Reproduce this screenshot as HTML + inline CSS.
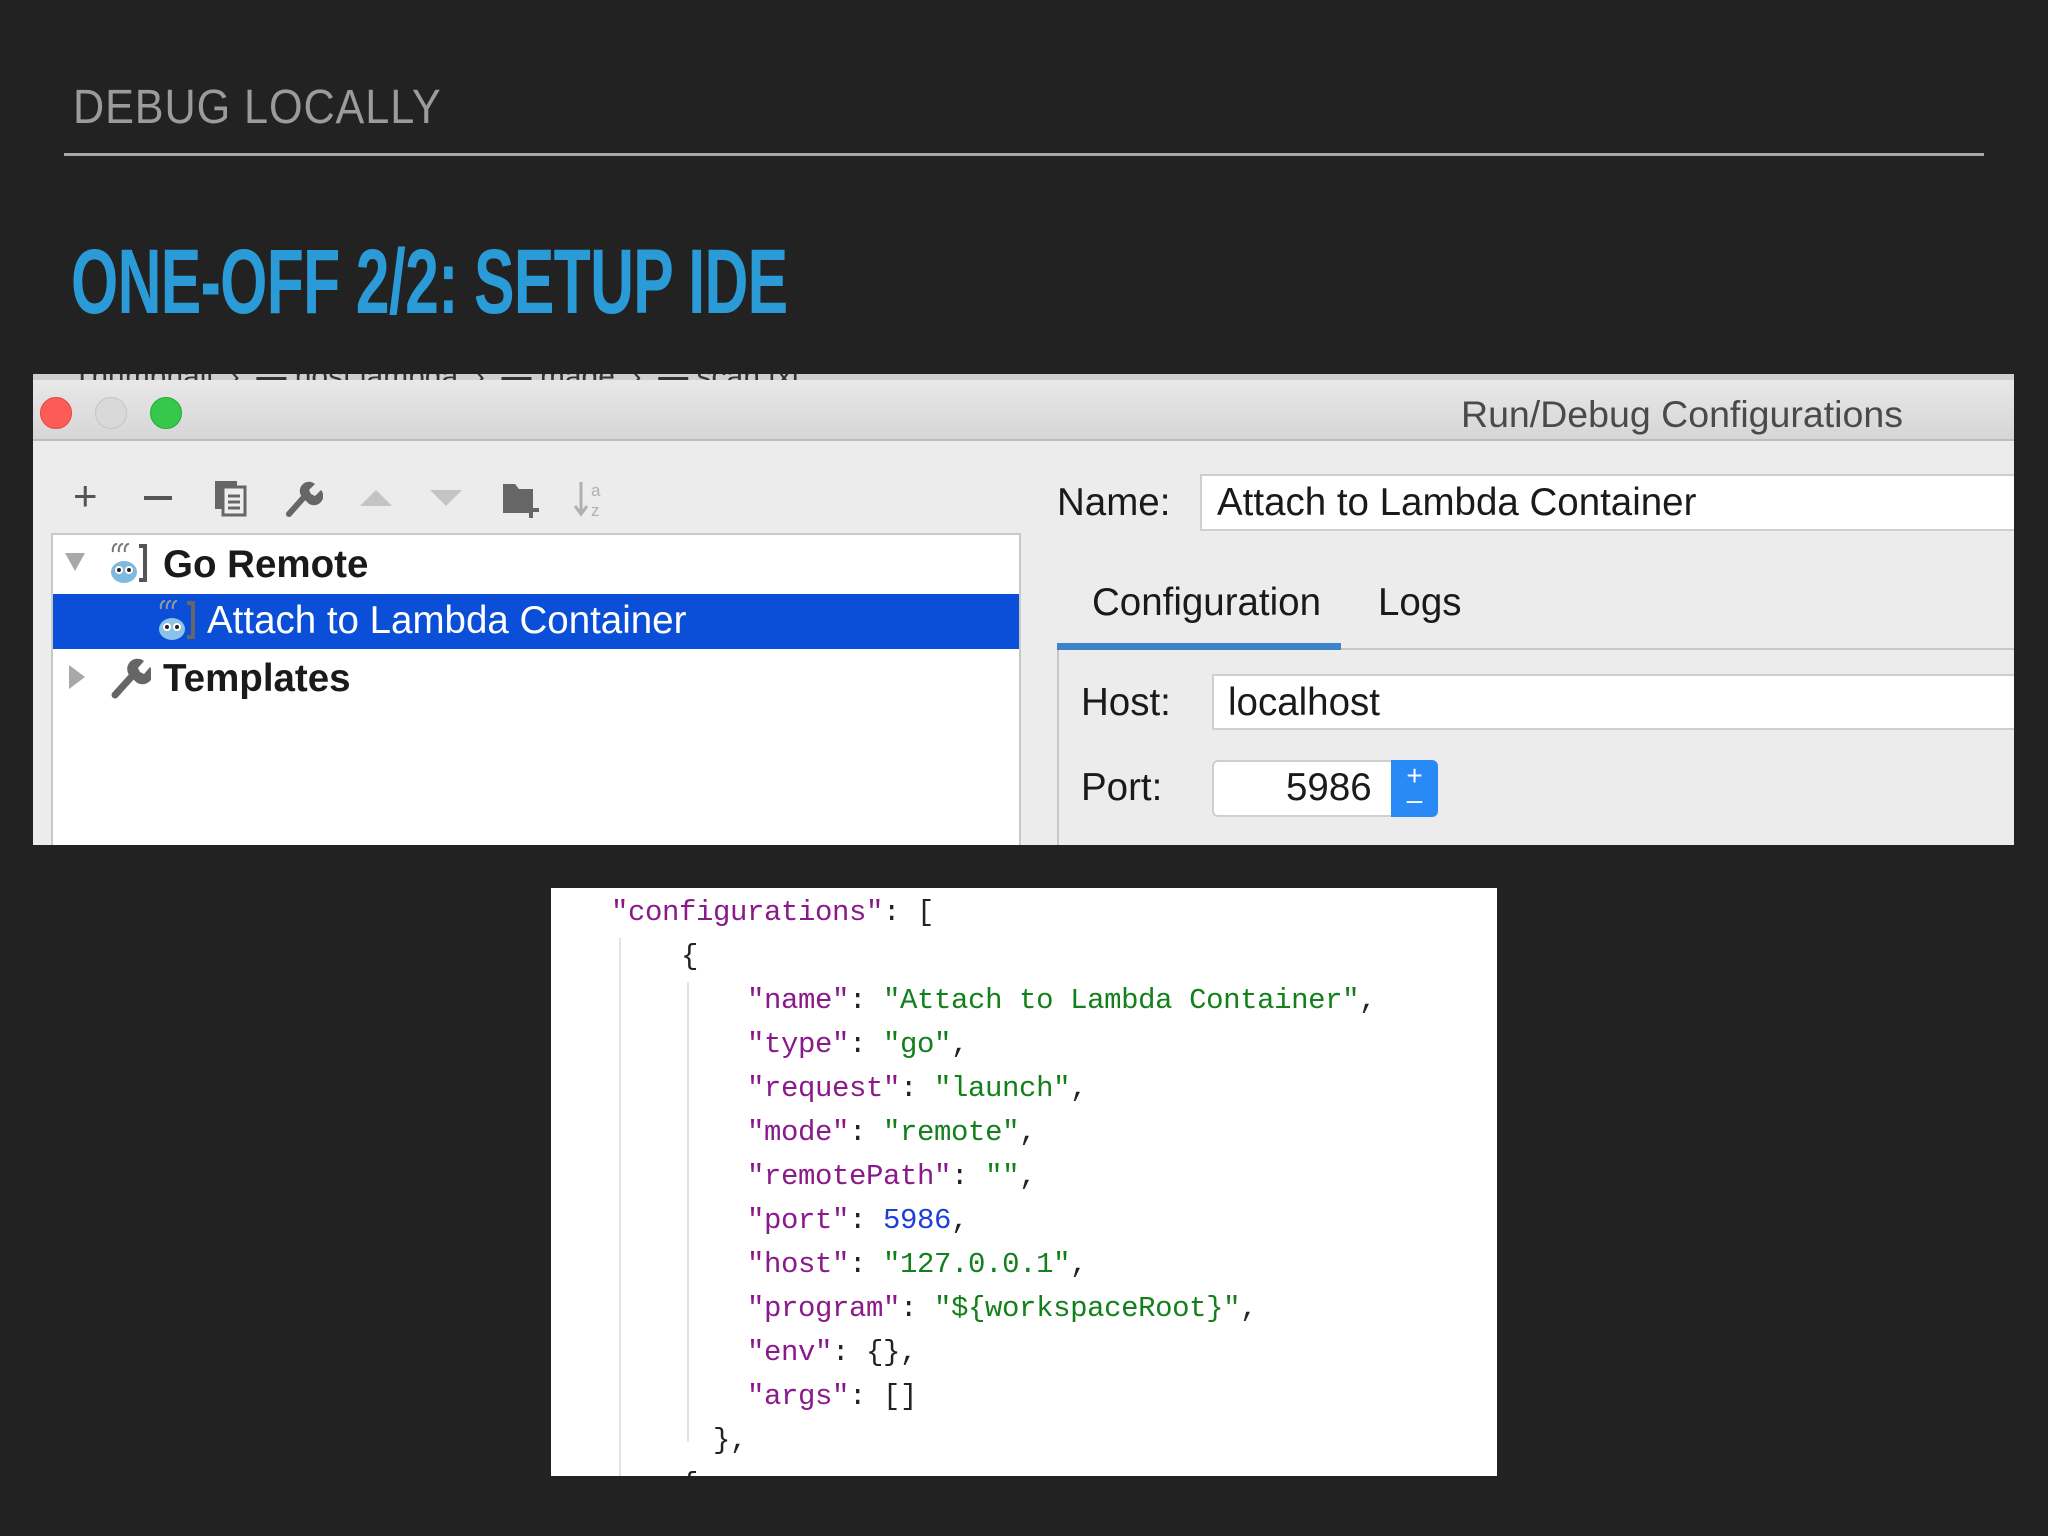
<!DOCTYPE html>
<html><head><meta charset="utf-8"><style>
*{margin:0;padding:0;box-sizing:border-box}
body{width:2048px;height:1536px;background:#222223;position:relative;overflow:hidden;font-family:"Liberation Sans",sans-serif}
.a{position:absolute}
.h1{left:73px;top:82px;font-size:48px;letter-spacing:1px;color:#9b9b9b;line-height:52px;transform:scaleX(0.9);transform-origin:left}
.rule{left:64px;top:153px;width:1920px;height:3px;background:#a8a8a8}
.h2{left:71px;top:232px;font-weight:bold;font-size:92px;line-height:100px;color:#2b9bd7;letter-spacing:-1px;transform:scaleX(0.66);transform-origin:left;white-space:nowrap}
.win{left:33px;top:374px;width:1981px;height:471px;background:#ececec;overflow:hidden}
.strip{left:0;top:0;width:100%;height:10px;background:#cfcfcf;overflow:hidden}
.tb{left:0;top:6px;width:100%;height:61px;background:linear-gradient(#e8e8e8,#d6d6d6);border-bottom:2px solid #bdbdbd}
.dot{width:32px;height:32px;border-radius:50%;top:17px}
.ui{font-size:38.5px;color:#1a1a1a;line-height:40px;white-space:nowrap}
.tree{left:18px;top:159px;width:970px;height:330px;background:#fff;border:2px solid #c9c9c9}
.field{background:#fff;border:2px solid #cfcfcf}
.code{left:551px;top:888px;width:946px;height:588px;background:#fff;overflow:hidden;font-family:"Liberation Mono",monospace;font-size:29px;letter-spacing:-0.4px}
.ln{position:absolute;white-space:pre;line-height:40px}
.k{color:#8a1a8c}.s{color:#14801b}.n{color:#1d3fd8}.p{color:#222}
.guide{position:absolute;width:2px;background:#e2e2e2}
</style></head><body>
<div class="a h1">DEBUG LOCALLY</div>
<div class="a rule"></div>
<div class="a h2">ONE-OFF 2/2: SETUP IDE</div>

<div class="a win">
 <div class="a strip"><div class="a" style="left:40px;top:-14px;font-size:30px;color:#333;white-space:pre">Thumbnail  ›  ▬ host lambda  ›  ▬ made  ›  ▬ scan.txt</div></div>
 <div class="a tb"></div>
 <div class="a dot" style="left:7px;top:23px;background:#fc5b57;border:1px solid #e04540"></div>
 <div class="a dot" style="left:62px;top:23px;background:#d9d9d9;border:1px solid #c4c4c4"></div>
 <div class="a dot" style="left:117px;top:23px;background:#35c84a;border:1px solid #27a93a"></div>
 <div class="a" style="left:1428px;top:19px;font-size:37.5px;color:#4a4a4a;white-space:nowrap">Run/Debug Configurations</div>

 <div class="a" style="left:40px;top:100px;font-size:42px;color:#555;line-height:44px">+</div>
 <div class="a" style="left:111px;top:122px;width:28px;height:4px;background:#555"></div>
 <svg class="a" style="left:180px;top:105px" width="36" height="38"><rect x="2" y="2" width="22" height="28" fill="#666"/><rect x="10" y="8" width="22" height="28" fill="#eee" stroke="#666" stroke-width="3"/><path d="M15 17h12M15 23h12M15 29h12" stroke="#666" stroke-width="3"/></svg>
 <svg class="a" style="left:250px;top:104px" width="40" height="40"><path d="M6 36L22 18" stroke="#666" stroke-width="6" stroke-linecap="round"/><path d="M20 20a9 9 0 0 1 12-14l-6 6 2 4 4 2 6-6a9 9 0 0 1-14 12z" fill="#666"/></svg>
 <svg class="a" style="left:325px;top:112px" width="36" height="24"><path d="M2 20L18 4 34 20z" fill="#c4c4c4"/></svg>
 <svg class="a" style="left:395px;top:112px" width="36" height="24"><path d="M2 4L18 20 34 4z" fill="#c4c4c4"/></svg>
 <svg class="a" style="left:468px;top:106px" width="42" height="38"><path d="M2 4h12l4 5h14v24H2z" fill="#666"/><path d="M30 22v16M22 30h16" stroke="#666" stroke-width="4"/></svg>
 <svg class="a" style="left:540px;top:104px" width="36" height="42"><path d="M8 4v30M2 28l6 8 6-8" stroke="#b0b0b0" stroke-width="3" fill="none"/><text x="18" y="18" font-size="17" fill="#b0b0b0" font-family="Liberation Sans">a</text><text x="18" y="38" font-size="17" fill="#b0b0b0" font-family="Liberation Sans">z</text></svg>

 <div class="a tree">
  <svg class="a" style="left:10px;top:14px" width="24" height="24"><path d="M2 4h20L12 22z" fill="#a8a8a8"/></svg>
  <svg class="a" style="left:54px;top:7px" width="42" height="42"><path d="M32 4h6v34h-6" stroke="#555" stroke-width="4" fill="none"/><path d="M6 10a4 6 0 0 1 4-8M12 10a4 6 0 0 1 4-8M18 10a4 6 0 0 1 4-8" stroke="#777" stroke-width="2" fill="none"/><ellipse cx="17" cy="30" rx="13" ry="11" fill="#7fb9e0"/><circle cx="12" cy="28" r="4" fill="#fff"/><circle cx="22" cy="28" r="4" fill="#fff"/><circle cx="12" cy="28" r="2" fill="#222"/><circle cx="22" cy="28" r="2" fill="#222"/></svg>
  <div class="a ui" style="left:110px;top:10px;font-weight:bold">Go Remote</div>
  <div class="a" style="left:0;top:59px;width:966px;height:55px;background:#0b4fd9"></div>
  <svg class="a" style="left:102px;top:64px" width="42" height="42"><path d="M32 4h6v34h-6" stroke="#666" stroke-width="4" fill="none"/><path d="M6 10a4 6 0 0 1 4-8M12 10a4 6 0 0 1 4-8M18 10a4 6 0 0 1 4-8" stroke="#999" stroke-width="2" fill="none"/><ellipse cx="17" cy="30" rx="13" ry="11" fill="#8cc3e8"/><circle cx="12" cy="28" r="4" fill="#fff"/><circle cx="22" cy="28" r="4" fill="#fff"/><circle cx="12" cy="28" r="2" fill="#222"/><circle cx="22" cy="28" r="2" fill="#222"/></svg>
  <div class="a ui" style="left:154px;top:66px;color:#fff">Attach to Lambda Container</div>
  <svg class="a" style="left:12px;top:128px" width="22" height="28"><path d="M4 2l16 12L4 26z" fill="#a8a8a8"/></svg>
  <svg class="a" style="left:56px;top:122px" width="42" height="42"><path d="M6 38L24 18" stroke="#666" stroke-width="7" stroke-linecap="round"/><path d="M22 20a10 10 0 0 1 13-16l-6 7 2 4 4 2 6-7a10 10 0 0 1-15 14z" fill="#666"/></svg>
  <div class="a ui" style="left:110px;top:124px;font-weight:bold">Templates</div>
 </div>

 <div class="a ui" style="left:1024px;top:109px">Name:</div>
 <div class="a field" style="left:1167px;top:100px;width:830px;height:57px"></div>
 <div class="a ui" style="left:1184px;top:109px">Attach to Lambda Container</div>
 <div class="a ui" style="left:1059px;top:209px">Configuration</div>
 <div class="a ui" style="left:1345px;top:209px">Logs</div>
 <div class="a" style="left:1024px;top:274px;width:960px;height:2px;background:#c8c8c8"></div>
 <div class="a" style="left:1024px;top:269px;width:284px;height:7px;background:#3d85c8"></div>
 <div class="a" style="left:1024px;top:276px;width:2px;height:200px;background:#c8c8c8"></div>
 <div class="a ui" style="left:1048px;top:309px">Host:</div>
 <div class="a field" style="left:1179px;top:300px;width:820px;height:56px"></div>
 <div class="a ui" style="left:1195px;top:309px">localhost</div>
 <div class="a ui" style="left:1048px;top:394px">Port:</div>
 <div class="a field" style="left:1179px;top:386px;width:226px;height:57px;border-radius:6px"></div>
 <div class="a ui" style="left:1253px;top:394px">5986</div>
 <div class="a" style="left:1358px;top:386px;width:47px;height:57px;background:#2a8af5;border-radius:0 6px 6px 0;color:#fff;font-size:28px;text-align:center;line-height:24px;padding-top:4px">+<br>–</div>
</div>

<div class="a code">
 <div class="guide" style="left:68px;top:50px;height:540px"></div>
 <div class="guide" style="left:136px;top:94px;height:460px"></div>
 <div class="ln" style="left:60px;top:5px"><span class="k">"configurations"</span><span class="p">: [</span></div>
 <div class="ln" style="left:130px;top:49px"><span class="p">{</span></div>
 <div class="ln" style="left:196px;top:93px"><span class="k">"name"</span><span class="p">: </span><span class="s">"Attach to Lambda Container"</span><span class="p">,</span></div>
 <div class="ln" style="left:196px;top:137px"><span class="k">"type"</span><span class="p">: </span><span class="s">"go"</span><span class="p">,</span></div>
 <div class="ln" style="left:196px;top:181px"><span class="k">"request"</span><span class="p">: </span><span class="s">"launch"</span><span class="p">,</span></div>
 <div class="ln" style="left:196px;top:225px"><span class="k">"mode"</span><span class="p">: </span><span class="s">"remote"</span><span class="p">,</span></div>
 <div class="ln" style="left:196px;top:269px"><span class="k">"remotePath"</span><span class="p">: </span><span class="s">""</span><span class="p">,</span></div>
 <div class="ln" style="left:196px;top:313px"><span class="k">"port"</span><span class="p">: </span><span class="n">5986</span><span class="p">,</span></div>
 <div class="ln" style="left:196px;top:357px"><span class="k">"host"</span><span class="p">: </span><span class="s">"127.0.0.1"</span><span class="p">,</span></div>
 <div class="ln" style="left:196px;top:401px"><span class="k">"program"</span><span class="p">: </span><span class="s">"${workspaceRoot}"</span><span class="p">,</span></div>
 <div class="ln" style="left:196px;top:445px"><span class="k">"env"</span><span class="p">: {},</span></div>
 <div class="ln" style="left:196px;top:489px"><span class="k">"args"</span><span class="p">: []</span></div>
 <div class="ln" style="left:162px;top:533px"><span class="p">},</span></div>
 <div class="ln" style="left:130px;top:577px"><span class="p">{</span></div>
</div>
</body></html>
